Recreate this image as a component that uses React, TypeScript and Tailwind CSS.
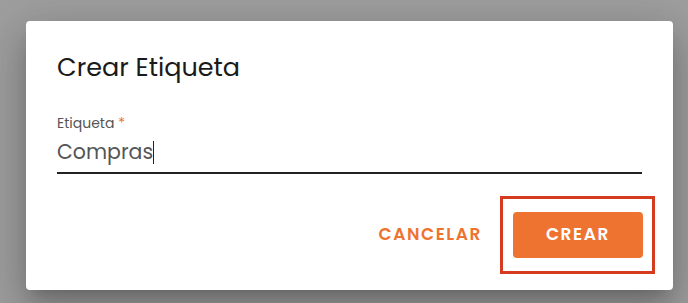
import React from "react";

export default function App() {
  return (
    <div
      className="w-[688px] h-[303px] bg-[#9e9e9e] overflow-hidden pt-[21px] pl-[26px]"
      style={{ fontFamily: "Poppins, Inter, 'Noto Sans', sans-serif" }}
    >
      <div className="w-[647px] h-[269px] bg-white rounded-[4px] shadow-[0_11px_15px_-7px_rgba(0,0,0,0.2),0_24px_38px_3px_rgba(0,0,0,0.14),0_9px_46px_8px_rgba(0,0,0,0.12)] flex flex-col">
        <div className="pl-[31px] pt-[30px] pr-[31px]">
          <h2 className="text-[25.5px] leading-[32px] text-[#1a1a1a] font-normal">Crear Etiqueta</h2>
          <div className="mt-[32px]">
            <div className="text-[14px] leading-[17px] text-[#555]">
              Etiqueta <span className="text-[#ee7330]">*</span>
            </div>
            <div className="h-[42px] flex items-center border-b-2 border-[#222] text-[20.5px] text-[#555]">
              Compras<span className="inline-block w-[1px] h-[23px] bg-[#222]" />
            </div>
          </div>
        </div>
        <div className="flex justify-end items-center pr-[18px] mt-[22px] gap-[10px]">
          <button className="text-[17px] font-semibold tracking-[1.6px] text-[#ee7330] px-[8px]">CANCELAR</button>
          <div className="border-[3px] border-[#d53b1f] pt-[13px] pb-[13px] pl-[10px] pr-[9px]">
            <button className="w-[130px] h-[46px] rounded-[4px] bg-[#ee7330] text-white text-[17px] font-semibold tracking-[1.6px]">
              CREAR
            </button>
          </div>
        </div>
      </div>
    </div>
  );
}
